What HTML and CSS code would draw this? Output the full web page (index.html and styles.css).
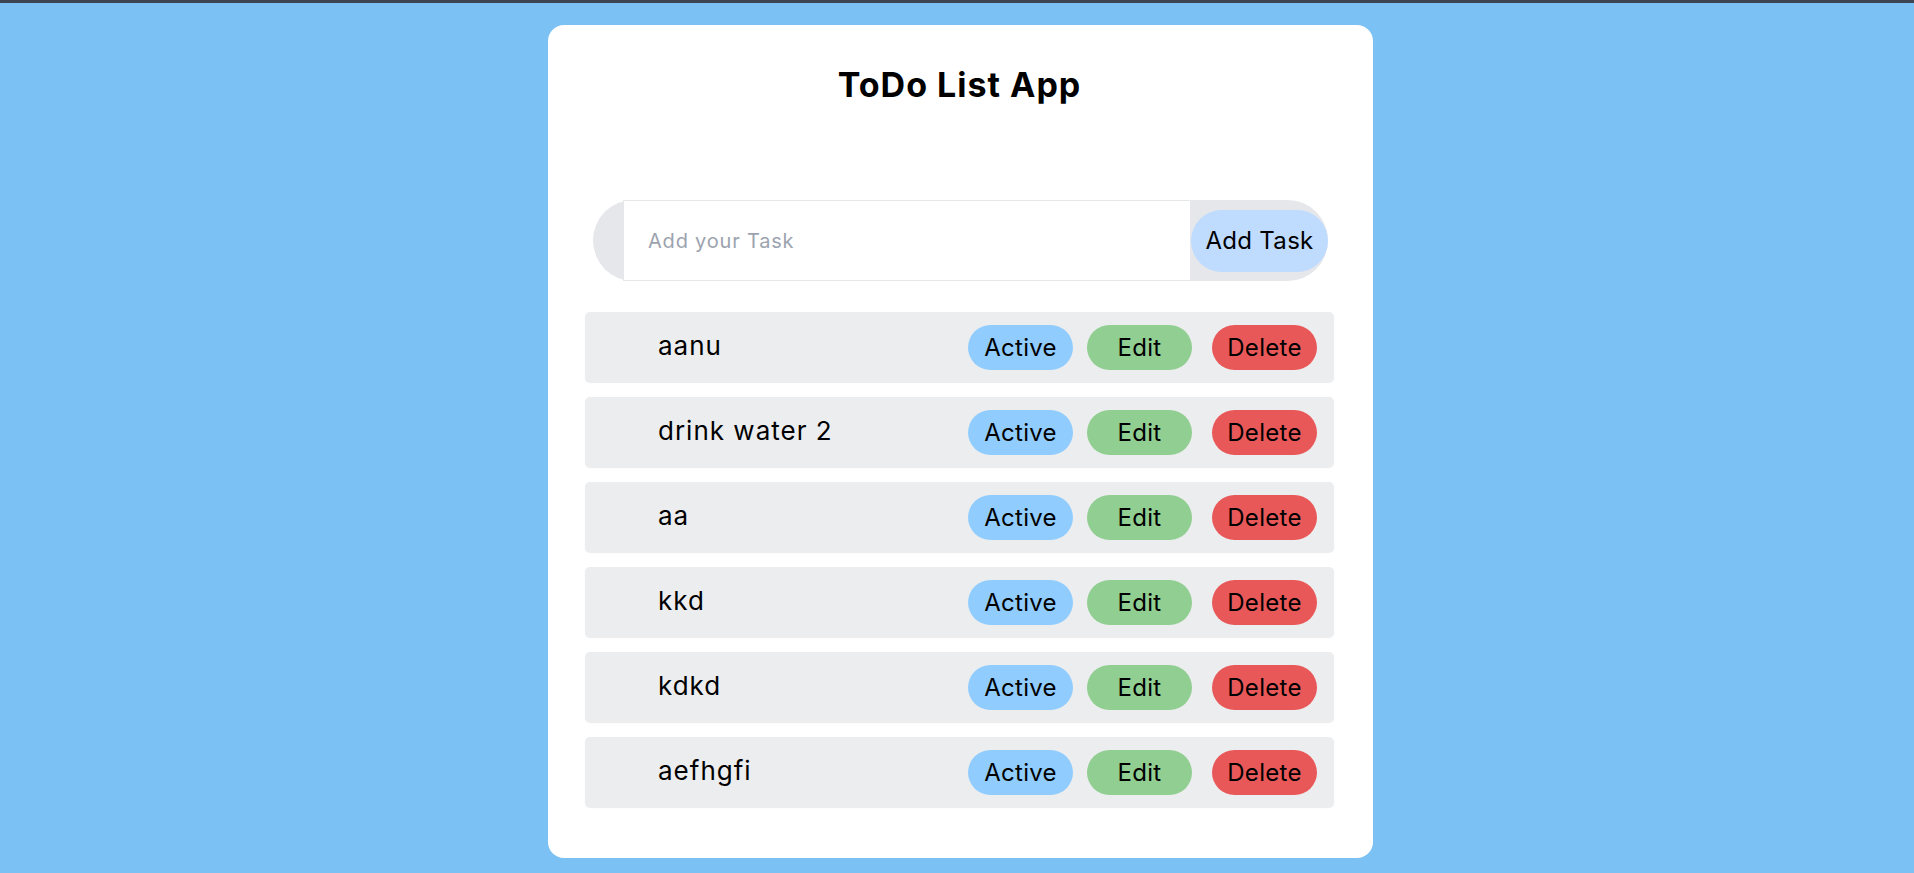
FILE: index.html
```html
<!DOCTYPE html>
<html lang="en">
<head>
<meta charset="utf-8">
<title>ToDo List App</title>
<link rel="stylesheet" href="styles.css">
</head>
<body>
<div class="page">
  <main class="card">
    <h1 class="title">ToDo List App</h1>
    <form class="add-form">
      <input class="add-input" type="text" placeholder="Add your Task">
      <button class="add-btn" type="button">Add Task</button>
    </form>
    <ul class="tasks">
      <li class="task"><span class="task-text">aanu</span><button class="btn btn-active">Active</button><button class="btn btn-edit">Edit</button><button class="btn btn-delete">Delete</button></li>
      <li class="task"><span class="task-text">drink water 2</span><button class="btn btn-active">Active</button><button class="btn btn-edit">Edit</button><button class="btn btn-delete">Delete</button></li>
      <li class="task"><span class="task-text">aa</span><button class="btn btn-active">Active</button><button class="btn btn-edit">Edit</button><button class="btn btn-delete">Delete</button></li>
      <li class="task"><span class="task-text">kkd</span><button class="btn btn-active">Active</button><button class="btn btn-edit">Edit</button><button class="btn btn-delete">Delete</button></li>
      <li class="task"><span class="task-text">kdkd</span><button class="btn btn-active">Active</button><button class="btn btn-edit">Edit</button><button class="btn btn-delete">Delete</button></li>
      <li class="task"><span class="task-text">aefhgfi</span><button class="btn btn-active">Active</button><button class="btn btn-edit">Edit</button><button class="btn btn-delete">Delete</button></li>
    </ul>
  </main>
</div>
</body>
</html>
```
FILE: styles.css
```css
* { box-sizing: border-box; }
html, body { margin: 0; padding: 0; }
body {
  background: #7bc1f4;
  border-top: 3px solid #3d4453;
  font-family: "Inter", "Noto Sans", sans-serif;
  color: #000;
  height: 873px;
  overflow: hidden;
}
.page {
  display: flex;
  justify-content: center;
  padding-top: 22px;
  padding-left: 7px;
}
.card {
  width: 825px;
  height: 833px;
  background: #fff;
  border-radius: 16px;
  padding: 0 39px 0 37px;
}
.title {
  margin: 36px 0 0;
  height: 48px;
  line-height: 48px;
  font-size: 34px;
  font-weight: 700;
  letter-spacing: 1px;
  text-align: center;
}
.add-form {
  margin: 91px 6px 0 8px;
  height: 81px;
  display: flex;
  align-items: center;
  background: #e5e7eb;
  border-radius: 9999px;
  padding-left: 30px;
}
.add-input {
  flex: 1;
  align-self: stretch;
  border: 1px solid #e5e7eb;
  background: #fff;
  padding: 0 0 0 24px;
  font: inherit;
  font-size: 20px;
  letter-spacing: 0.8px;
  outline: none;
}
.add-input::placeholder { color: #9ca3af; }
.add-btn {
  width: 137px;
  height: 62px;
  border: none;
  border-radius: 9999px;
  background: #bfdbfe;
  font: inherit;
  font-size: 24px;
  letter-spacing: 0.3px;
  color: #000;
  padding: 0;
}
.tasks {
  list-style: none;
  margin: 31px 0 0;
  padding: 0;
  display: flex;
  flex-direction: column;
  gap: 15px;
}
.task {
  height: 70px;
  display: flex;
  align-items: center;
  background: #ecedef;
  border-radius: 5px;
  box-shadow: 0 1px 1px rgba(0,0,0,0.08);
  padding: 0 17px 0 73px;
}
.task-text {
  flex: 1;
  font-size: 26px;
  letter-spacing: 1px;
  margin-top: -3px;
}
.btn {
  width: 105px;
  height: 45px;
  border: none;
  border-radius: 9999px;
  font: inherit;
  font-size: 24px;
  letter-spacing: 0.3px;
  color: #000;
  padding: 0;
}
.btn-active { background: #90cdfe; }
.btn-edit { background: #91ce91; margin-left: 14px; }
.btn-delete { background: #e95858; margin-left: 20px; }
```
